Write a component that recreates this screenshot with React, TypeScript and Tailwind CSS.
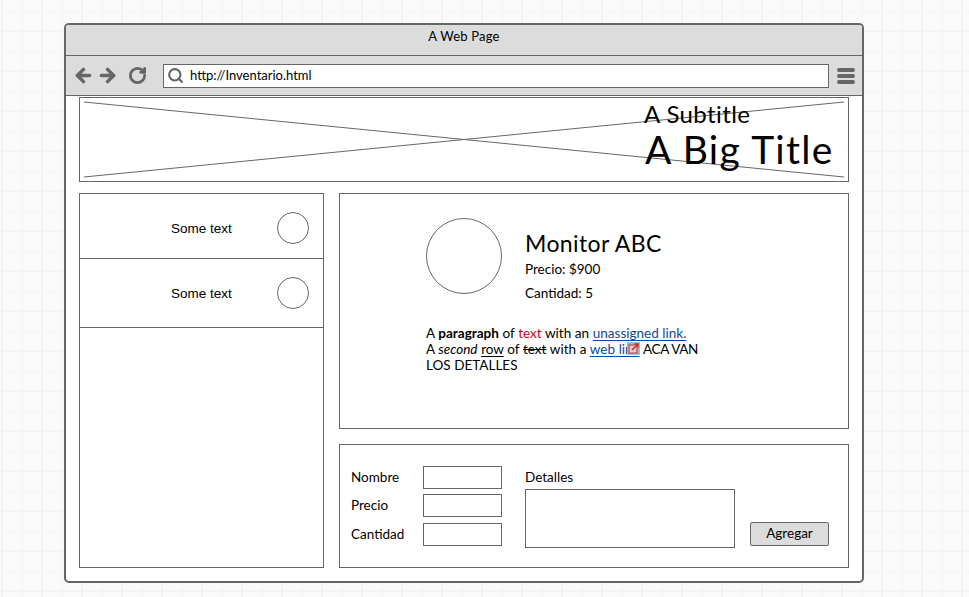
import { ArrowLeft, ArrowRight, RotateCw, Search } from "lucide-react";

const sans = "font-['Lato','Noto_Sans',sans-serif]";

function ListRow({ className }: { className: string }) {
  return (
    <div className={`flex items-center border-b border-[#666] pl-[91px] pr-[14px] ${className}`}>
      <span className="flex-1 pt-[2px] font-['Liberation_Sans',sans-serif] text-[13.5px] text-black">Some text</span>
      <div className="h-[32px] w-[32px] rounded-full border border-[#666]" />
    </div>
  );
}

function Field({ label, className }: { label: string; className?: string }) {
  return (
    <div className={`flex h-[23px] items-center ${className ?? ""}`}>
      <span className="w-[72px] text-[13.5px] leading-none text-black">{label}</span>
      <div className="h-[23px] w-[79px] border border-[#666] bg-white" />
    </div>
  );
}

export default function App() {
  return (
    <div
      className={`h-[597px] w-[969px] overflow-hidden bg-[#fafafa] bg-[linear-gradient(#f3f3f3_2px,transparent_2px),linear-gradient(90deg,#f3f3f3_2px,transparent_2px),linear-gradient(#f5f5f5_1px,transparent_1px),linear-gradient(90deg,#f5f5f5_1px,transparent_1px)] bg-[size:40px_40px,40px_40px,20px_20px,20px_20px] bg-[position:0_30px,41px_0,0_11px,2px_0] pl-[64px] pt-[23px] ${sans}`}
    >
      <div className="h-[560px] w-[800px] overflow-hidden rounded-[5px] border-2 border-[#666] bg-white">
        {/* title bar */}
        <div className="flex h-[31px] items-start justify-center border-b border-[#666] bg-[#dcdcdc] pt-[3px] text-[13px] leading-[16px] tracking-[0.2px] text-black">
          A Web Page
        </div>

        {/* toolbar */}
        <div className="flex h-[40px] items-center border-b border-[#666] bg-[#dcdcdc] pl-[7px]">
          <ArrowLeft size={21} strokeWidth={4} className="text-[#666]" />
          <ArrowRight size={21} strokeWidth={4} className="ml-[3px] text-[#666]" />
          <RotateCw size={19} strokeWidth={3.6} className="ml-[10px] text-[#666]" />
          <div className="ml-[16px] flex h-[24px] w-[666px] items-center border border-[#666] bg-white pl-[3px]">
            <Search size={17} strokeWidth={3} className="text-[#666]" />
            <span className="ml-[6px] text-[13px] leading-none text-black">http://Inventario.html</span>
          </div>
          <div className="ml-[8px] flex w-[18px] flex-col gap-[2px]">
            <div className="h-[4px] rounded-[2px] bg-[#666]" />
            <div className="h-[4px] rounded-[2px] bg-[#666]" />
            <div className="h-[4px] rounded-[2px] bg-[#666]" />
          </div>
        </div>

        <div className="px-[13px] pt-[1px]">
          {/* banner */}
          <div className="relative flex h-[85px] w-[770px] flex-col border border-[#666] pl-[564px]">
            <svg className="absolute inset-0 h-full w-full" viewBox="0 0 768 83" fill="none">
              <path d="M4 4 L764 79 M4 79 L764 4" stroke="#666" strokeWidth="1" />
            </svg>
            <span className="relative mt-[1px] text-[24px] leading-[29px] tracking-[0.4px] text-black">A Subtitle</span>
            <span className="relative ml-[1px] mt-[-1px] text-[39px] leading-[45px] tracking-[1.3px] text-black">A Big Title</span>
          </div>

          <div className="mt-[11px] flex h-[375px] w-[770px] gap-[15px]">
            {/* list */}
            <div className="w-[245px] border border-[#666]">
              <ListRow className="h-[65px] pt-[4px]" />
              <ListRow className="h-[69px]" />
            </div>

            <div className="flex w-[510px] flex-col gap-[15px]">
              {/* detail */}
              <div className="h-[236px] border border-[#666] pl-[86px] pt-[24px]">
                <div className="flex">
                  <div className="h-[76px] w-[76px] rounded-full border border-[#666]" />
                  <div className="ml-[23px] pt-[11px] text-black">
                    <div className="text-[23px] leading-[28px] tracking-[0.4px]">Monitor ABC</div>
                    <div className="mt-[3px] text-[13.5px] leading-[18px]">Precio: $900</div>
                    <div className="mt-[6px] text-[13.5px] leading-[18px]">Cantidad: 5</div>
                  </div>
                </div>
                <div className="mt-[23px] w-[300px] text-[13.5px] leading-[16px] text-black [word-spacing:0.2px]">
                  <div>
                    A <b>paragraph</b> of <span className="text-[#d0021b]">text</span> with an{" "}
                    <span className="text-[#0b4a9e] underline underline-offset-2">unassigned link.</span>
                  </div>
                  <div>
                    A <i>second</i> <span className="underline underline-offset-2">row</span> of{" "}
                    <span className="line-through">text</span> with a{" "}
                    <span className="relative text-[#0b4a9e] underline underline-offset-2">
                      web link
                      <svg className="absolute right-[-1px] top-[1px] h-[13px] w-[13px]" viewBox="0 0 13 13" fill="none">
                        <rect width="13" height="13" fill="#a9b8d0" />
                        <rect x="2" y="3" width="8" height="8" fill="#e8c8c8" stroke="#c0504d" strokeWidth="1.2" />
                        <path d="M5 8 L11 2 M7.5 2 H11 V5.5" stroke="#d0302b" strokeWidth="1.6" />
                      </svg>
                    </span>{" "}
                    <span className="tracking-[-0.4px]">ACA VAN</span>
                  </div>
                  <div>LOS DETALLES</div>
                </div>
              </div>

              {/* form */}
              <div className="flex h-[124px] border border-[#666] pl-[11px] pt-[21px]">
                <div className="flex flex-col">
                  <Field label="Nombre" />
                  <Field label="Precio" className="mt-[5px]" />
                  <Field label="Cantidad" className="mt-[6px]" />
                </div>
                <div className="ml-[23px]">
                  <div className="h-[23px] pt-[3px] text-[13.5px] leading-[16px] text-black">Detalles</div>
                  <div className="h-[59px] w-[210px] border border-[#666] bg-white" />
                </div>
                <button className="ml-[15px] mt-[56px] h-[24px] w-[79px] rounded-[2px] border border-[#666] bg-[#dcdcdc] text-[13.5px] leading-none text-black">
                  Agregar
                </button>
              </div>
            </div>
          </div>
        </div>
      </div>
    </div>
  );
}
